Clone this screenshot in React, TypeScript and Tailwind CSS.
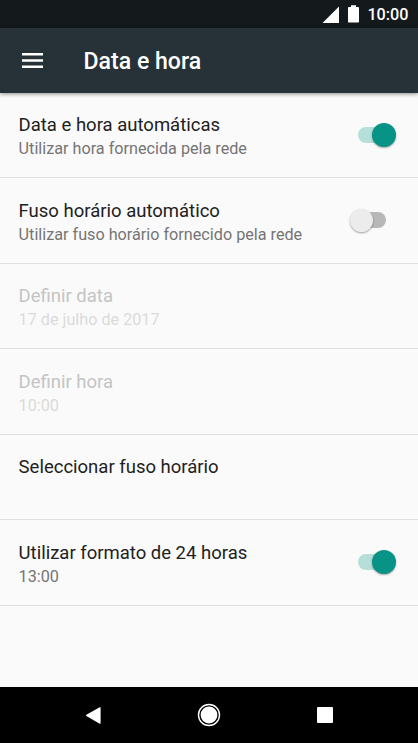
type Setting = {
  title: string;
  summary?: string;
  checked?: boolean;
  disabled?: boolean;
};

const settings: Setting[] = [
  { title: "Data e hora automáticas", summary: "Utilizar hora fornecida pela rede", checked: true },
  { title: "Fuso horário automático", summary: "Utilizar fuso horário fornecido pela rede", checked: false },
  { title: "Definir data", summary: "17 de julho de 2017", disabled: true },
  { title: "Definir hora", summary: "10:00", disabled: true },
  { title: "Seleccionar fuso horário" },
  { title: "Utilizar formato de 24 horas", summary: "13:00", checked: true },
];

function Toggle({ checked }: { checked: boolean }) {
  return (
    <button
      role="switch"
      aria-checked={checked}
      className={`mr-[9px] flex h-4 w-7 shrink-0 items-center rounded-full ${
        checked ? "justify-end bg-[#b7dfda]" : "justify-start bg-[#b8b8b8]"
      }`}
    >
      <span
        className={`size-[23.5px] shrink-0 rounded-full shadow-[0_1px_2px_rgba(0,0,0,0.35)] ${
          checked ? "-mr-[9.5px] bg-[#079486]" : "-ml-[8.5px] bg-[#ececec]"
        }`}
      />
    </button>
  );
}

function Row({ title, summary, checked, disabled }: Setting) {
  return (
    <li className="flex h-[85.45px] items-start justify-between border-b border-[#dedede] pt-[21.4px] pr-[23px] pl-[18.6px]">
      <div>
        <div className={`text-[18.5px] leading-[22px] ${disabled ? "text-[#c4c4c4]" : "text-[#212121]"}`}>{title}</div>
        {summary && (
          <div className={`mt-[2px] text-[16.2px] leading-[22px] ${disabled ? "text-[#dadada]" : "text-[#757575]"}`}>
            {summary}
          </div>
        )}
      </div>
      {checked !== undefined && (
        <div className="flex h-[41px] items-center">
          <Toggle checked={checked} />
        </div>
      )}
    </li>
  );
}

export default function App() {
  return (
    <div className="flex h-[743px] w-[418px] flex-col overflow-hidden bg-[#fafafa] font-['Roboto',sans-serif]">
      <div className="flex h-7 shrink-0 items-center justify-end bg-[#14191c] pr-[9.5px] text-white">
        <svg width="17" height="17" viewBox="0 0 17 17" className="mr-[9px]" fill="currentColor">
          <path d="M17 .5V17H.5z" />
        </svg>
        <svg width="11" height="18" viewBox="0 0 11 18" className="mr-[8.5px]" fill="currentColor">
          <path d="M3 .3h5v1.700h2.200q.8 0 .8.8v14q0 .8-.8.8H.8q-.8 0-.8-.8v-14q0-.8.8-.8H3z" />
        </svg>
        <span className="pt-px text-[16.2px] leading-7 font-medium">10:00</span>
      </div>
      <header className="relative flex h-[65px] shrink-0 items-center bg-[#263238] pl-[22px] text-white shadow-[0_1px_4px_rgba(0,0,0,0.45)]">
        <svg width="21" height="15" viewBox="0 0 21 15" fill="currentColor">
          <path d="M0 0h21v2.400H0zM0 6.300h21v2.400H0zM0 12.600h21V15H0z" />
        </svg>
        <h1 className="ml-[40.5px] pt-[3px] text-[23.1px] leading-7 font-medium">Data e hora</h1>
      </header>
      <ul className="grow">
        {settings.map((s) => (
          <Row key={s.title} {...s} />
        ))}
      </ul>
      <nav className="flex h-14 shrink-0 items-center justify-between bg-black pr-[85px] pl-[86px] text-white">
        <svg width="15" height="17" viewBox="0 0 15 17" fill="currentColor">
          <path d="M13.700.2 .4 7.800q-.8.700 0 1.300l13.300 7.700q.9.300.9-.7V.900q0-1-.9-.7z" />
        </svg>
        <svg width="24" height="24" viewBox="0 0 24 24">
          <circle cx="12" cy="12" r="10.500" fill="none" stroke="currentColor" strokeWidth="1.400" />
          <circle cx="12" cy="12" r="8.400" fill="currentColor" />
        </svg>
        <span className="size-4 rounded-[1px] bg-white" />
      </nav>
    </div>
  );
}
